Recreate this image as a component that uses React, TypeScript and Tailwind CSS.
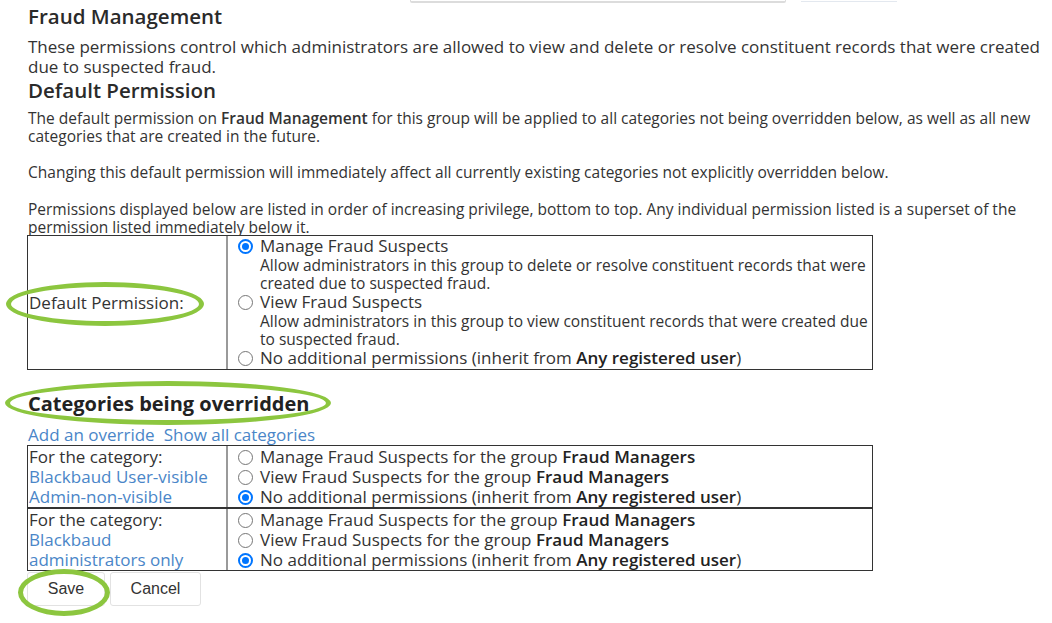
import React from "react";

const Radio = ({ checked }: { checked?: boolean }) =>
  checked ? (
    <span className="inline-flex w-[15px] h-[15px] shrink-0 rounded-full border-[2px] border-[#0075ff] bg-white items-center justify-center">
      <span className="w-[7px] h-[7px] rounded-full bg-[#0075ff]" />
    </span>
  ) : (
    <span className="inline-block w-[15px] h-[15px] shrink-0 rounded-full border border-[#767676] bg-white" />
  );

const Opt = ({ checked, children }: { checked?: boolean; children: React.ReactNode }) => (
  <div className="flex items-center h-[20px] gap-[7px]">
    <Radio checked={checked} />
    <span className="whitespace-nowrap">{children}</span>
  </div>
);

const Ellipse = ({ cls }: { cls: string }) => (
  <span className={"absolute pointer-events-none rounded-[50%] border-[5px] border-[#8cc63f] " + cls} />
);

export default function App() {
  return (
    <div className="relative w-[1052px] h-[623px] bg-white overflow-hidden text-[#333] font-['Open_Sans',sans-serif]">
      {/* top cut-off controls */}
      <div className="flex h-[3px]">
        <div className="ml-[410px] w-[376px] h-[3px] border-x border-b-2 border-[#dcdcdc] rounded-b-[2px]" />
        <div className="ml-[15px] w-[96px] h-[2px] border-b border-[#e3e8ef]" />
      </div>

      <div className="pl-[28px]">
        <h2 className="text-[20.5px] leading-[24px] font-semibold text-[#2a2a2a] mt-[1px]">Fraud Management</h2>
        <p className="text-[17px] leading-[20px] mt-[9px]">
          These permissions control which administrators are allowed to view and delete or resolve constituent records that were created due to suspected fraud.
        </p>
        <h3 className="text-[20.5px] leading-[24px] font-semibold text-[#2a2a2a] mt-[1px]">Default Permission</h3>
        <div className="text-[15.5px] leading-[18px] mt-[7px]">
          <p>
            The default permission on <span className="font-semibold">Fraud Management</span> for this group will be applied to all categories not being overridden below, as well as all new categories that are created in the future.
          </p>
          <p className="mt-[18px]">
            Changing this default permission will immediately affect all currently existing categories not explicitly overridden below.
          </p>
          <p className="mt-[19px]">
            Permissions displayed below are listed in order of increasing privilege, bottom to top. Any individual permission listed is a superset of the permission listed immediately below it.
          </p>
        </div>
      </div>

      {/* default permission table */}
      <div className="relative ml-[27px] mt-[-1px] w-[846px] grid grid-cols-[200px_1fr] border border-[#333] bg-white">
        <div className="flex items-center pl-[1px] text-[17px] border-r-2 border-[#9a9a9a]">Default Permission:</div>
        <div className="pl-[10px] pb-[1px] text-[17px] leading-[20px]">
          <Opt checked>Manage Fraud Suspects</Opt>
          <div className="pl-[22px] text-[15.5px] leading-[18px]">
            Allow administrators in this group to delete or resolve constituent records that were<br />created due to suspected fraud.
          </div>
          <Opt>View Fraud Suspects</Opt>
          <div className="pl-[22px] text-[15.5px] leading-[18px]">
            Allow administrators in this group to view constituent records that were created due<br />to suspected fraud.
          </div>
          <Opt>
            No additional permissions (inherit from <span className="font-semibold text-[#222]">Any registered user</span>)
          </Opt>
        </div>
        <Ellipse cls="left-[-22px] top-[46px] w-[198px] h-[44px]" />
      </div>

      <div className="relative pl-[28px] mt-[22px]">
        <h3 className="text-[20px] leading-[24px] font-bold text-[#222]">Categories being overridden</h3>
        <Ellipse cls="left-[5px] top-[-11px] w-[326px] h-[44px]" />
        <div className="flex gap-[9px] text-[17px] leading-[20px] text-[#4a86c8] mt-[9px]">
          <span>Add an override</span>
          <span>Show all categories</span>
        </div>
      </div>

      {/* overrides table */}
      <div className="ml-[27px] w-[846px] border border-[#333] text-[17px] leading-[20px]">
        {[
          { cat: "Blackbaud User-visible Admin-non-visible" },
          { cat: "Blackbaud administrators only" },
        ].map((r, i) => (
          <div key={i} className={"grid grid-cols-[200px_1fr] " + (i === 1 ? "border-t-2 border-[#333]" : "")}>
            <div className="pl-[1px] pr-[2px] pt-[1px] border-r-2 border-[#9a9a9a]">
              <div>For the category:</div>
              <div className="text-[#4a86c8]">{r.cat}</div>
            </div>
            <div className="pl-[10px] pt-[1px]">
              <Opt>
                Manage Fraud Suspects for the group <span className="font-semibold text-[#222]">Fraud Managers</span>
              </Opt>
              <Opt>
                View Fraud Suspects for the group <span className="font-semibold text-[#222]">Fraud Managers</span>
              </Opt>
              <Opt checked>
                No additional permissions (inherit from <span className="font-semibold text-[#222]">Any registered user</span>)
              </Opt>
            </div>
          </div>
        ))}
      </div>

      <div className="relative flex gap-[5px] ml-[27px] mt-[1px] font-['Liberation_Sans',Arial,sans-serif] text-[16px] text-[#333]">
        <button className="w-[78px] h-[34px] bg-white border border-[#e2e2e2] rounded-[3px]">Save</button>
        <button className="w-[91px] h-[34px] bg-white border border-[#e2e2e2] rounded-[3px]">Cancel</button>
        <Ellipse cls="left-[-9px] top-[-3px] w-[92px] h-[47px]" />
      </div>
    </div>
  );
}
